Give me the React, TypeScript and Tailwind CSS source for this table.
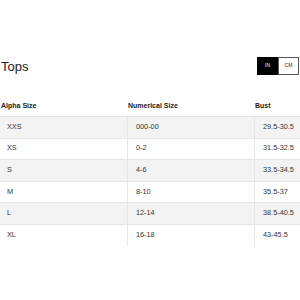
const rows = [
  { alpha: "XXS", num: "000-00", bust: "29.5-30.5" },
  { alpha: "XS", num: "0-2", bust: "31.5-32.5" },
  { alpha: "S", num: "4-6", bust: "33.5-34.5" },
  { alpha: "M", num: "8-10", bust: "35.5-37" },
  { alpha: "L", num: "12-14", bust: "38.5-40.5" },
  { alpha: "XL", num: "16-18", bust: "43-45.5" },
];

export default function App() {
  return (
    <main
      className="w-[300px] h-[300px] bg-white text-[#222] overflow-hidden"
      style={{ fontFamily: '"Liberation Sans", Arial, sans-serif' }}
    >
      <div className="pt-[57px] pl-[1px] pr-[1px] flex items-center justify-between">
        <h1 className="text-[13px] leading-[13px] font-normal">Tops</h1>
        <div className="flex h-[18px] text-[5px]">
          <button className="w-[21px] bg-black text-white border border-black flex items-center justify-center">
            IN
          </button>
          <button className="w-[21px] bg-white text-[#222] border border-[#555] flex items-center justify-center">
            CM
          </button>
        </div>
      </div>

      <section className="mt-[22px]">
        <div className="grid grid-cols-[127px_127px_1fr] h-[19px] items-center text-[7px] font-bold">
          <span className="pl-[1px]">Alpha Size</span>
          <span className="pl-[1px]">Numerical Size</span>
          <span className="pl-[1px]">Bust</span>
        </div>
        {rows.map((r, i) => (
          <div
            key={r.alpha}
            className={`grid grid-cols-[127px_127px_1fr] h-[21.6px] text-[7.3px] text-[#333] border-t border-[#e6e6e6] ${
              i % 2 === 0 ? "bg-[#f3f3f3]" : "bg-white"
            }`}
          >
            <span className="pl-[7px] flex items-center">{r.alpha}</span>
            <span className="pl-[8px] flex items-center border-l border-[#e6e6e6]">{r.num}</span>
            <span className="pl-[8px] flex items-center border-l border-[#e6e6e6]">{r.bust}</span>
          </div>
        ))}
      </section>
    </main>
  );
}
